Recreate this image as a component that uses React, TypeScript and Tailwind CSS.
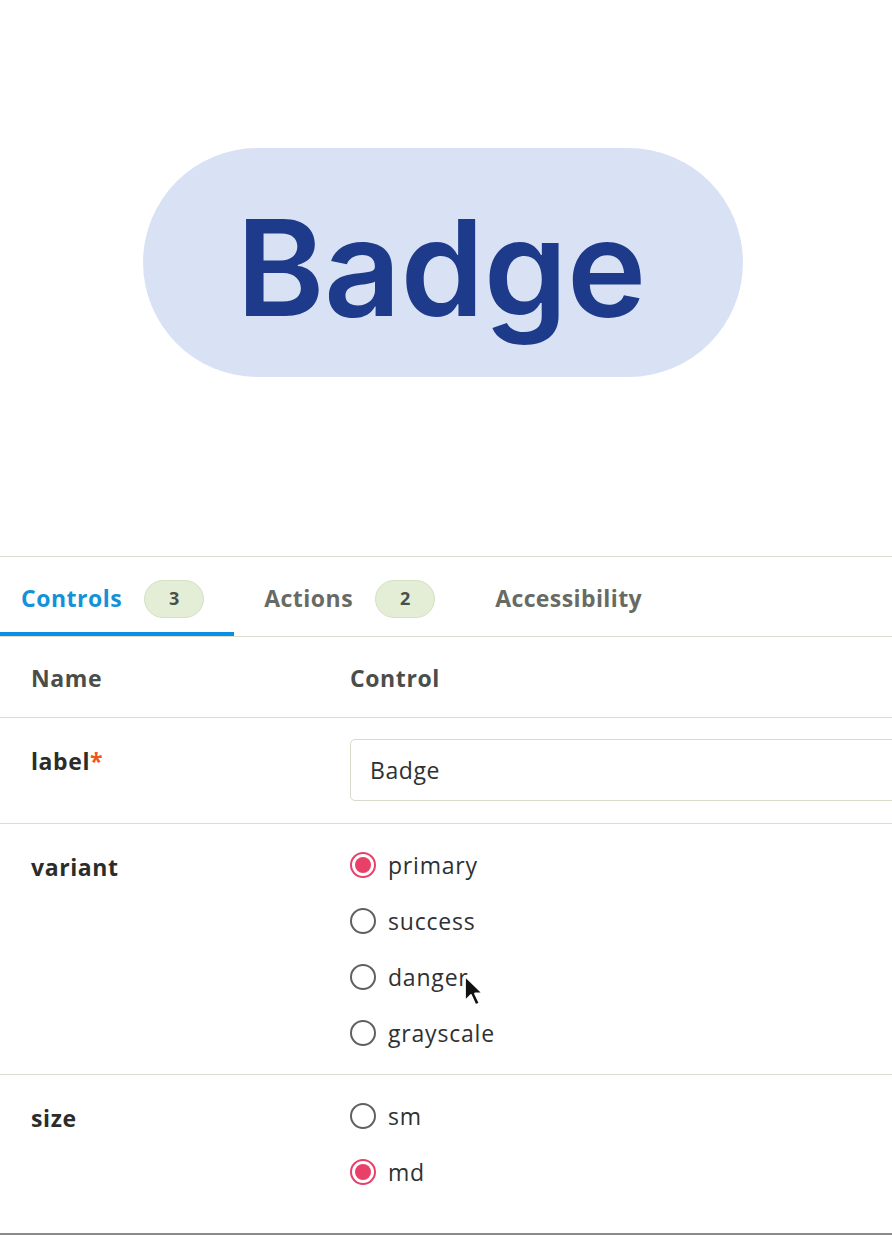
import React from "react";

const ui = { fontFamily: "'Open Sans', 'Noto Sans', sans-serif" };

function Radio({ label, checked }: { label: string; checked?: boolean }) {
  return (
    <div className="flex h-[56px] items-center gap-[12px]">
      {checked ? (
        <span className="flex h-[26px] w-[26px] items-center justify-center rounded-full border-2 border-[#e9406a] bg-white">
          <span className="h-[16px] w-[16px] rounded-full bg-[#e9406a]" />
        </span>
      ) : (
        <span className="h-[26px] w-[26px] rounded-full border-2 border-[#5f6160] bg-white" />
      )}
      <span className="text-[23px] tracking-[0.8px] text-[#2e3133]">{label}</span>
    </div>
  );
}

function Count({ n }: { n: number }) {
  return (
    <span className="flex h-[38px] w-[60px] items-center justify-center rounded-full border border-[#d6e0c4] bg-[#e4edd6] text-[18px] font-bold text-[#4a4f4c]">
      {n}
    </span>
  );
}

export default function App() {
  return (
    <div className="relative h-[1236px] w-[892px] overflow-hidden bg-white" style={ui}>
      <div className="flex h-[556px] justify-center pr-[6px] pt-[148px]">
        <div
          className="flex h-[229px] w-[600px] shrink-0 items-center justify-center rounded-full bg-[#d9e2f5] pr-[4px] pt-[9px] text-[134px] font-semibold tracking-[-0.5px] text-[#1e3a8a]"
          style={{ fontFamily: "Inter, sans-serif" }}
        >
          Badge
        </div>
      </div>

      <div className="flex h-[81px] border-y border-[#dcdccf]">
        <div className="flex items-center gap-[22px] border-b-[4px] border-[#0a8fe3] pl-[21px] pr-[30px] pt-[8px]">
          <span className="text-[23px] font-bold tracking-[0.5px] text-[#1591d8]">Controls</span>
          <Count n={3} />
        </div>
        <div className="flex items-center gap-[22px] px-[30px] pt-[4px]">
          <span className="text-[23px] font-bold tracking-[0.5px] text-[#676b64]">Actions</span>
          <Count n={2} />
        </div>
        <div className="flex items-center px-[30px] pt-[4px]">
          <span className="text-[23px] font-bold tracking-[0.4px] text-[#676b64]">Accessibility</span>
        </div>
      </div>

      <div className="flex h-[81px] items-center border-b border-[#dcdccf] pt-[2px] text-[23px] font-bold tracking-[0.6px] text-[#4a4d4a]">
        <div className="w-[350px] shrink-0 pl-[31px]">Name</div>
        <div>Control</div>
      </div>

      <div className="flex h-[106px] border-b border-[#dcdccf]">
        <div className="w-[350px] shrink-0 pl-[31px] pt-[26px] text-[23px] font-bold tracking-[0.6px] text-[#2b2d2b]">
          label<span className="text-[#f2541b]">*</span>
        </div>
        <div className="shrink-0 pt-[21px]">
          <div className="flex h-[62px] w-[600px] items-center rounded-[5px] border border-[#d8dac9] bg-white pl-[19px] text-[23px] tracking-[0.6px] text-[#2e3133]">
            Badge
          </div>
        </div>
      </div>

      <div className="flex h-[251px] border-b border-[#dcdccf]">
        <div className="w-[350px] shrink-0 pl-[31px] pt-[26px] text-[23px] font-bold tracking-[0.6px] text-[#2b2d2b]">variant</div>
        <div className="pt-[13px]">
          <Radio label="primary" checked />
          <Radio label="success" />
          <Radio label="danger" />
          <Radio label="grayscale" />
        </div>
      </div>

      <div className="flex h-[160px] border-b-2 border-[#8a8a86]">
        <div className="w-[350px] shrink-0 pl-[31px] pt-[26px] text-[23px] font-bold tracking-[0.6px] text-[#2b2d2b]">size</div>
        <div className="pt-[13px]">
          <Radio label="sm" />
          <Radio label="md" checked />
        </div>
      </div>

      <svg className="absolute left-[463px] top-[974px]" width="24" height="36" viewBox="0 0 24 36">
        <path
          d="M2 2 L2 27 L8 21 L12.5 31 L16.5 29.2 L12 19.5 L20 19.5 Z"
          fill="#111"
          stroke="#fff"
          strokeWidth="1.8"
          strokeLinejoin="round"
        />
      </svg>
    </div>
  );
}
